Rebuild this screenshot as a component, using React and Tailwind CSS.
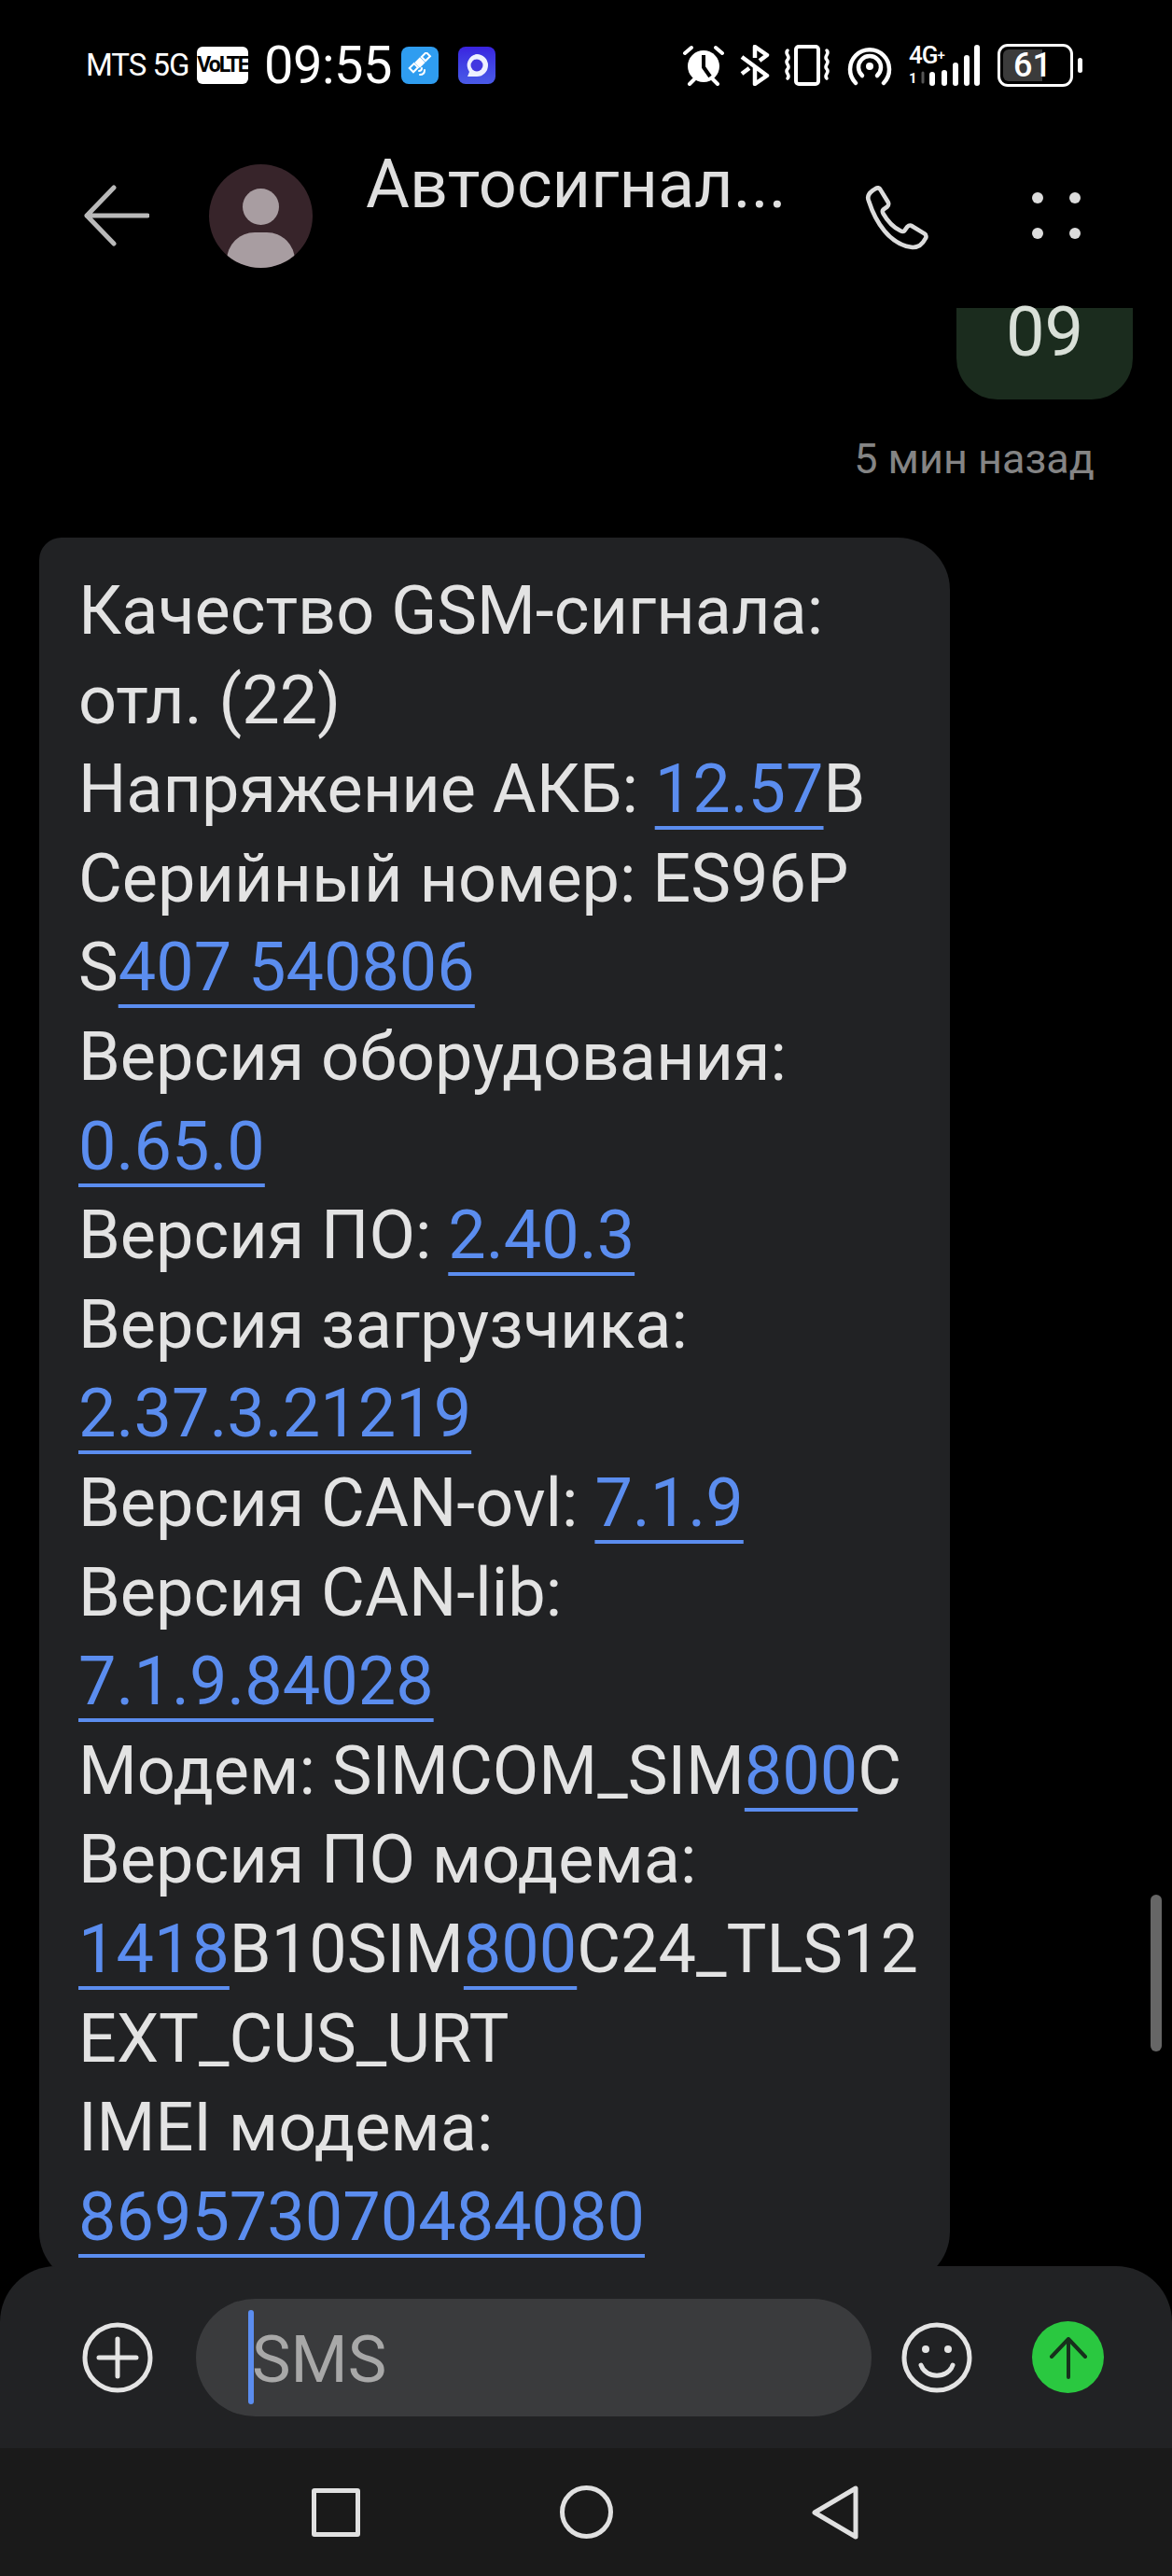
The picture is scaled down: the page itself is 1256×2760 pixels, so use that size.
import React from 'react';

const Link = ({ children }) => (
  <span className="text-[#5b8def] underline decoration-[4px] underline-offset-[15px] [text-decoration-skip-ink:none]">{children}</span>
);

const StatusBar = () => (
  <div className="h-[140px] flex items-center text-white shrink-0">
    <span className="ml-[92px] w-[112px] text-[33px] tracking-[-1px] whitespace-nowrap">MTS 5G</span>
    <span className="ml-[7px] w-[55px] h-[40px] bg-white rounded-[6px] text-black text-[23px] font-bold leading-[40px] text-center tracking-[-2px] whitespace-nowrap">VoLTE</span>
    <span className="ml-[17px] w-[129px] text-[56px] leading-none whitespace-nowrap tracking-[-0.5px]">09:55</span>
    <div className="ml-[18px] w-[40px] h-[40px] rounded-[8px] bg-[#2f9df0] flex items-center justify-center">
      <svg width="28" height="28" viewBox="0 0 28 28" fill="none" stroke="#fff" strokeWidth="2">
        <rect x="4" y="14" width="7" height="6" transform="rotate(-45 7 17)" />
        <rect x="11" y="8" width="6" height="6" fill="#fff" transform="rotate(-45 14 11)" />
        <rect x="17" y="2" width="7" height="6" transform="rotate(-45 20 5)" />
        <path d="M14 24c3 0 5-2 5-5M13 20c2 0 3-1 3-3" strokeLinecap="round" />
      </svg>
    </div>
    <div className="ml-[21px] w-[40px] h-[40px] rounded-[8px] bg-gradient-to-b from-[#3a22e0] to-[#4a5ae8] flex items-center justify-center">
      <svg width="30" height="30" viewBox="0 0 30 30">
        <path d="M15 3a12 12 0 0 1 0 24H5l2-5A12 12 0 0 1 15 3z" fill="#eef0ff" />
        <circle cx="15" cy="15" r="6.5" fill="#4338e0" />
      </svg>
    </div>
    <svg className="ml-[200px]" width="46" height="44" viewBox="0 0 46 44" fill="none">
      <circle cx="23" cy="23" r="17" fill="#fff" />
      <path d="M23 11v13l7 10" stroke="#000" strokeWidth="4" strokeLinejoin="round" />
      <path d="M3 9l7-6M43 9l-7-6M8 42l5-5M38 42l-5-5" stroke="#fff" strokeWidth="4" strokeLinecap="round" />
    </svg>
    <svg className="ml-[16px]" width="32" height="44" viewBox="0 0 32 44" fill="none" stroke="#fff" strokeWidth="4.5" strokeLinejoin="round">
      <path d="M2 13l27 20-13 9V24M16 14V2l13 9-8 6M2 31l8-6" />
    </svg>
    <svg className="ml-[14px]" width="52" height="44" viewBox="0 0 52 44" fill="none" stroke="#fff" strokeLinecap="round">
      <rect x="14" y="2" width="24" height="40" rx="3" strokeWidth="4" />
      <path d="M5 6c-4 4 4 6 0 10s4 6 0 10 4 6 0 10M47 6c4 4-4 6 0 10s-4 6 0 10-4 6 0 10" strokeWidth="3.5" />
    </svg>
    <svg className="ml-[17px]" width="48" height="44" viewBox="0 0 48 44" fill="none" stroke="#fff" strokeWidth="4.5" strokeLinecap="round">
      <path d="M9 41a21 21 0 1 1 30 0" />
      <path d="M16 33a12 12 0 1 1 16 0" />
      <circle cx="24" cy="23" r="4" fill="#fff" stroke="none" />
    </svg>
    <div className="ml-[18px] w-[76px] h-[44px] relative shrink-0">
      <span className="absolute left-0 top-[-4px] text-[26px] leading-[30px] font-medium tracking-[-1px]">4G<span className="text-[15px] align-top">+</span></span>
      <span className="absolute left-0 bottom-[0px] text-[15px] leading-[16px] font-bold">1</span>
      <svg className="absolute left-0 top-0" width="76" height="44" viewBox="0 0 76 44" stroke="#fff" strokeWidth="6" strokeLinecap="round">
        <path d="M25 32v9M38 30v11M50 22v19M62 14v27" />
        <path d="M73 3v38" />
        <path d="M15 30v10" stroke="#555" strokeWidth="3" />
      </svg>
    </div>
    <div className="ml-[19px] w-[81px] h-[46px] rounded-[11px] border-[3px] border-white relative p-[3px] shrink-0">
      <div className="h-full w-[61%] bg-[#3b3b3b] rounded-l-[6px]" />
      <span className="absolute inset-0 text-center text-[36px] leading-[40px] font-medium pr-[6px]">61</span>
    </div>
    <div className="ml-[5px] w-[5px] h-[16px] bg-white rounded-full" />
  </div>
);

const Header = () => (
  <div className="h-[190px] pb-[8px] shrink-0 flex items-center text-[#dfdfdf]">
    <svg className="ml-[90px]" width="70" height="66" viewBox="0 0 70 66" fill="none" stroke="#b9b9b9" strokeWidth="5" strokeLinecap="round" strokeLinejoin="round">
      <path d="M32 3L3 33l29 30M3 33h65" />
    </svg>
    <div className="ml-[64px] w-[111px] h-[111px] rounded-full bg-[#37242a] overflow-hidden relative shrink-0">
      <div className="absolute left-[36px] top-[26px] w-[39px] h-[39px] rounded-full bg-[#a89da1]" />
      <div className="absolute left-[19px] top-[73px] w-[73px] h-[60px] rounded-full bg-[#a89da1]" />
    </div>
    <span className="ml-[57px] mb-[66px] w-[470px] text-[72px] leading-[76px] whitespace-nowrap">Автосигнал...</span>
    <svg className="ml-[65px] mt-[10px]" width="74" height="74" viewBox="0 0 72 72" fill="none" stroke="#dcdcdc" strokeWidth="4.5" strokeLinejoin="round">
      <path d="M4 16c-2-4 0-8 4-11l3-2c2-1 4-1 5 1l8 13c1 2 1 3-1 5l-4 3c-1 1-1 2 0 4 4 7 10 14 18 18 2 1 3 1 4 0l3-4c2-2 3-2 5-1l13 8c2 1 2 4 1 5-3 6-8 10-15 9C26 61 11 38 4 16z" />
    </svg>
    <div className="ml-[105px] grid grid-cols-2 gap-x-[28px] gap-y-[26px]">
      <span className="w-[12px] h-[12px] rounded-full bg-[#dcdcdc]" />
      <span className="w-[12px] h-[12px] rounded-full bg-[#dcdcdc]" />
      <span className="w-[12px] h-[12px] rounded-full bg-[#dcdcdc]" />
      <span className="w-[12px] h-[12px] rounded-full bg-[#dcdcdc]" />
    </div>
  </div>
);

const Messages = () => (
  <div className="h-[2140px] shrink-0 relative">
    <div className="ml-auto mr-[42px] w-[189px] h-[98px] bg-[#1b2c1e] rounded-b-[44px] text-center text-[#d9e0d8] text-[74px] leading-[52px]">09</div>
    <div className="mt-[38px] mr-[83px] text-right text-[#848484] text-[45px] leading-[52px] h-[110px]">5 мин назад</div>
    <div className="ml-[42px] w-[976px] h-[1871px] bg-[#212224] rounded-[56px] rounded-tl-[24px] pl-[42px] pt-[31px] text-[#e3e3e3] text-[72px] leading-[95.6px]">
      <div>Качество GSM-сигнала:</div>
      <div>отл. (22)</div>
      <div>Напряжение АКБ: <Link>12.57</Link>В</div>
      <div>Серийный номер: ES96P</div>
      <div>S<Link>407 540806</Link></div>
      <div>Версия оборудования:</div>
      <div><Link>0.65.0</Link></div>
      <div>Версия ПО: <Link>2.40.3</Link></div>
      <div>Версия загрузчика:</div>
      <div><Link>2.37.3.21219</Link></div>
      <div>Версия CAN-ovl: <Link>7.1.9</Link></div>
      <div>Версия CAN-lib:</div>
      <div><Link>7.1.9.84028</Link></div>
      <div>Модем: SIMCOM_SIM<Link>800</Link>C</div>
      <div>Версия ПО модема:</div>
      <div><Link>1418</Link>B10SIM<Link>800</Link>C24_TLS12</div>
      <div>EXT_CUS_URT</div>
      <div>IMEI модема:</div>
      <div><Link>869573070484080</Link></div>
    </div>
    <div className="absolute left-[1233px] top-[1700px] w-[12px] h-[168px] rounded-full bg-[#666666]" />
  </div>
);

const Composer = () => (
  <div className="relative z-10 -mt-[42px] h-[195px] shrink-0 bg-[#212224] rounded-t-[60px] flex items-center">
    <svg className="ml-[88px]" width="76" height="76" viewBox="0 0 76 76" fill="none" stroke="#e4e4e4" strokeWidth="5" strokeLinecap="round">
      <circle cx="38" cy="38" r="35" />
      <path d="M18 38h40M38 18v40" />
    </svg>
    <div className="ml-[46px] w-[724px] h-[126px] bg-[#3a3b3d] rounded-[63px] flex items-center pl-[56px] relative">
      <div className="w-[6px] h-[101px] rounded-full bg-[#5b8def] shrink-0" />
      <span className="text-[#a8a8a8] text-[70px] leading-none -ml-[2px] mt-[4px]">SMS</span>
    </div>
    <svg className="ml-[32px]" width="76" height="76" viewBox="0 0 76 76" fill="none" stroke="#e4e4e4" strokeWidth="5" strokeLinecap="round">
      <circle cx="38" cy="38" r="35" />
      <path d="M21 46c5 15 29 15 34 0" />
      <circle cx="26" cy="29" r="4" fill="#e4e4e4" stroke="none" />
      <circle cx="50" cy="29" r="4" fill="#e4e4e4" stroke="none" />
    </svg>
    <div className="ml-[64px] w-[77px] h-[77px] rounded-full bg-[#2ac840] flex items-center justify-center">
      <svg width="44" height="46" viewBox="0 0 44 46" fill="none" stroke="#17301c" strokeWidth="4" strokeLinecap="round" strokeLinejoin="round">
        <path d="M22 44V3M4 22L22 3l18 19" />
      </svg>
    </div>
  </div>
);

const NavBar = () => (
  <div className="h-[137px] shrink-0 bg-[#1a1a1a] flex items-center relative z-10">
    <div className="ml-[334px] w-[52px] h-[52px] border-[5px] border-[#e0e0e0] rounded-[3px]" />
    <div className="ml-[214px] w-[57px] h-[57px] border-[5px] border-[#e0e0e0] rounded-full" />
    <svg className="ml-[213px]" width="50" height="58" viewBox="0 0 50 58" fill="none" stroke="#e0e0e0" strokeWidth="5" strokeLinejoin="round">
      <path d="M47 3v52L3 29z" />
    </svg>
  </div>
);

const App = () => (
  <div className="w-[1256px] h-[2760px] bg-black overflow-hidden flex flex-col font-['Roboto',sans-serif]">
    <StatusBar />
    <Header />
    <Messages />
    <Composer />
    <NavBar />
  </div>
);

export default App;
